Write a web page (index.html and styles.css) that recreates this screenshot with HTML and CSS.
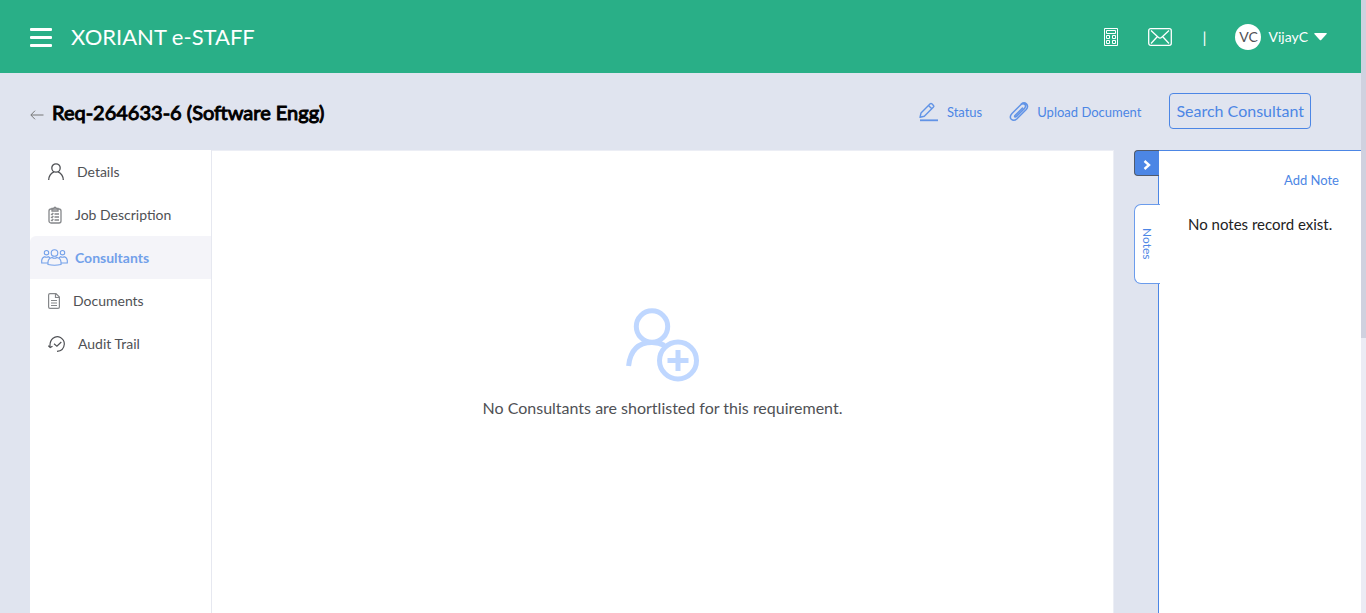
FILE: index.html
```html
<!DOCTYPE html>
<html lang="en">
<head>
<meta charset="utf-8">
<meta name="viewport" content="width=device-width, initial-scale=1">
<title>XORIANT e-STAFF</title>
<link rel="stylesheet" href="styles.css">
</head>
<body>
<div class="page">
  <header class="topbar">
    <button class="menu-button" type="button" aria-label="Menu"><span class="bar"></span><span class="bar"></span><span class="bar"></span></button>
    <a class="brand" href="#">XORIANT e-STAFF</a>
    <div class="tools">
      <a class="tool calc" href="#" aria-label="Calculator">
        <svg width="14" height="18" viewBox="0 0 14 18" fill="none" stroke="currentColor"><path d="M.5 .5h13v17H.5zM2.5 2.500h9v3h-9zM2.500 7.500h3v3h-3zM8.500 7.500h3v3h-3zM2.500 12.500h3v3h-3zM8.500 12.500h3v3h-3z"/></svg>
      </a>
      <a class="tool mail" href="#" aria-label="Mail">
        <svg width="24" height="18" viewBox="0 0 24 18" fill="none" stroke="currentColor" stroke-width="1.3"><rect x=".7" y=".7" width="22.600" height="16.600" rx="2"/><path d="M3 2.500l7.500 7q1.500 1.200 3 0l7.500-7M3 15.500l6-6.500M21 15.500l-6-6.500"/></svg>
      </a>
      <span class="divider">|</span>
      <button class="user" type="button"><span class="avatar">VC</span><span>VijayC</span>
        <svg width="13" height="8" viewBox="0 0 13 8" fill="currentColor"><path d="M.8 0h11.400q1 .3.400 1L7.200 7q-.7.600-1.400 0L.4 1Q0 .2.800 0z"/></svg>
      </button>
    </div>
  </header>

  <div class="titlebar">
    <a class="back" href="#" aria-label="Back"><svg width="14" height="10" viewBox="0 0 14 10" fill="none" stroke="currentColor"><path d="M13.500 5H1M5 .7L.8 5 5 9.300"/></svg></a>
    <h1 class="title">Req-264633-6 (Software Engg)</h1>
    <div class="actions">
      <a class="action" href="#">
        <svg width="20" height="20" viewBox="0 0 20 20" fill="none" stroke="currentColor" stroke-width="1.400" stroke-linejoin="round" opacity=".85"><path d="M2 11L11.200 1.800q.8-.8 1.600 0l1.700 1.700q.8.800 0 1.600L5.300 14.200 1 15.300zM9.500 3.500l3.300 3.300"/><path d="M1 18.300h18" stroke-width="1.800"/></svg>
        <span>Status</span>
      </a>
      <a class="action" href="#">
        <svg width="20" height="20" viewBox="0 0 20 20" fill="none" stroke="currentColor" stroke-width="1.500" stroke-linecap="round" opacity=".85"><path d="M13.500 6L6 13.500q-1 1.500.3 1.500.6 0 1.200-.6l8-8q2-2.300.3-4-1.800-1.700-4 .3L3 11.500q-3 3.300-.7 5.800 2.500 2.300 5.700-.6l9.200-9.200q2.600-3.200.2-5.600-2.400-2.100-5.200.2"/></svg>
        <span>Upload Document</span>
      </a>
      <button class="search" type="button">Search Consultant</button>
    </div>
  </div>

  <div class="content">
    <nav class="sidebar">
      <a class="item" href="#"><svg width="16" height="17" viewBox="0 0 16 17" fill="none" stroke="currentColor" stroke-width="1.300"><circle cx="8" cy="5" r="4.200"/><path d="M.7 17q.2-6 5.200-8.200M15.300 17q-.2-6-5.200-8.200"/></svg><span>Details</span></a>
      <a class="item" href="#"><svg class="soft" width="14" height="18" viewBox="0 0 14 18" fill="none" stroke="currentColor" stroke-width="1.300"><rect x="1" y="3" width="12" height="14" rx="2"/><path d="M4 5V2.500h1.500Q7 0 8.500 2.500H10V5zM6.500 8H11M6.500 11H11M6.500 14H11M3 8l1 .7L5.300 7M3 11l1 .7L5.300 10M3 14l1 .7L5.300 13"/></svg><span>Job Description</span></a>
      <a class="item active" href="#" aria-current="page"><svg width="27" height="17" viewBox="0 0 27 17" fill="none" stroke="currentColor" stroke-width="1.100"><circle cx="13.500" cy="4" r="3.300"/><circle cx="5.500" cy="3.700" r="2.200"/><circle cx="21.500" cy="3.700" r="2.200"/><path d="M7 15.500V13q.2-3.500 4-4.500 2.500 1.500 5 0 3.800 1 4 4.500v2.500q-6.500 1.500-13 0zM7 14H.7v-2.500q.2-3 3-3.800 1.800 1 3.600 0l1.700 1M20 14h6.300v-2.500q-.2-3-3-3.800-1.800 1-3.600 0l-1.700 1"/></svg><span>Consultants</span></a>
      <a class="item" href="#"><svg class="soft" width="12" height="16" viewBox="0 0 12 16" fill="none" stroke="currentColor" stroke-width="1.200"><path d="M2 .6h6l3.400 3.500V14q0 1.400-1.400 1.400H2Q.6 15.400.6 14V2Q.6.600 2 .6zM7.500.8v3.700h3.700M3 7.500h6M3 10h6M3 12.500h6"/></svg><span>Documents</span></a>
      <a class="item" href="#"><svg width="17" height="16" viewBox="0 0 17 16" fill="none" stroke="currentColor" stroke-width="1.200"><path d="M2 11.500Q1.500 5 5 2.300 8.500-.5 12.500 1.500 16.500 4 16.300 8.200 15.800 14.800 9 15.400M.3 9.700L2.200 11.600l2.300-1.400M6 7.800l2.900 2.300L13.300 6"/></svg><span>Audit Trail</span></a>
    </nav>

    <main class="main">
      <svg width="74" height="74" viewBox="0 0 74 74" fill="none" stroke="#bfd7ff" stroke-width="5"><circle cx="26" cy="18.500" r="15.700"/><path d="M2.600 58Q5 34.500 26 34.500q7 0 12.500 3"/><circle cx="52" cy="52.500" r="18.500"/><path d="M52 42v21M41.500 52.500h21"/></svg>
      <p class="empty">No Consultants are shortlisted for this requirement.</p>
    </main>

    <aside class="notes">
      <div class="tabs">
        <button class="collapse" type="button" aria-label="Collapse notes"><svg width="8" height="10" viewBox="0 0 8 10" fill="none" stroke="currentColor" stroke-width="2.400"><path d="M1.500 1L6 5 1.500 9"/></svg></button>
        <button class="tab" type="button">Notes</button>
      </div>
      <div class="notes-panel">
        <a class="add" href="#">Add Note</a>
        <p class="none">No notes record exist.</p>
      </div>
    </aside>
  </div>
</div>
<div class="track"><div class="thumb"></div></div>
</body>
</html>
```
FILE: styles.css
```css
* { box-sizing: border-box; }

body {
  margin: 0;
  min-height: 100vh;
  display: flex;
  background: #e0e4ef;
  color: #4f5155;
  font-family: Lato, "Liberation Sans", sans-serif;
  font-size: 14px;
}

a { color: inherit; text-decoration: none; }
button { font: inherit; color: inherit; background: none; border: 0; padding: 0; cursor: pointer; }
svg { display: block; flex: none; }
h1, p { margin: 0; }

.page { flex: 1; display: flex; flex-direction: column; }

.topbar {
  display: flex;
  align-items: center;
  height: 73px;
  padding: 0 34px 0 30px;
  background: #29af87;
  color: #fff;
}
.menu-button { display: flex; flex-direction: column; gap: 5px; width: 22px; margin-top: 2px; }
.bar { height: 3px; width: 100%; background: #fff; border-radius: 1px; }
.brand { margin-left: 19px; font-size: 22px; }
.tools { display: flex; align-items: center; margin-left: auto; }
.mail { margin-left: 30px; }
.divider { margin: 0 29px 0 30px; font-size: 16px; }
.user { display: flex; align-items: center; gap: 6px; }
.avatar {
  width: 26px;
  height: 26px;
  margin-right: 1px;
  border-radius: 50%;
  background: #fff;
  color: #4f5155;
  line-height: 25px;
}

.titlebar { display: flex; align-items: center; height: 77px; padding: 0 50px 2px 30px; }
.back { padding-top: 8px; color: #777; }
.title { margin: 3px 0 0 8px; font-size: 20px; font-weight: 400; color: #000; -webkit-text-stroke: 1px #000; }
.actions { display: flex; align-items: center; margin-left: auto; color: #4c86e5; }
.action { display: flex; align-items: center; gap: 8px; margin-right: 28px; padding-top: 2px; font-size: 13px; }
.action + .action { margin-right: 28px; margin-left: -1px; }
.search {
  height: 36px;
  padding: 0 6px;
  border: 1px solid #4c86e5;
  border-radius: 4px;
  font-size: 16px;
}

.content { flex: 1; display: flex; }
.sidebar { width: 182px; margin-left: 30px; background: #fff; border-right: 1px solid #e6e8f0; }
.item { display: flex; align-items: center; gap: 13px; height: 43px; padding-left: 18px; }
.soft { color: #85878a; }
.item.active {
  gap: 7px;
  padding-left: 11px;
  border-top-left-radius: 6px;
  background: #f4f4f9;
  color: #72a0ea;
  font-weight: 700;
}

.main {
  flex: 1;
  display: flex;
  flex-direction: column;
  align-items: center;
  padding-top: 157px;
  border-top: 1px solid #eceef5;
  border-right: 1px solid #eceef5;
  background: #fff;
}
.empty { margin-top: 16px; font-size: 16px; }

.notes { display: flex; width: 227px; margin-left: 20px; }
.tabs { display: flex; flex-direction: column; width: 25px; z-index: 1; }
.collapse {
  display: flex;
  align-items: center;
  justify-content: center;
  height: 26px;
  padding-top: 3px;
  border: 1px solid #505a6c;
  border-right: 0;
  border-radius: 4px 0 0 4px;
  background: #4c86e5;
  color: #fff;
}
.tab {
  height: 80px;
  width: 26px;
  margin-top: 28px;
  border: 1px solid #6b9cec;
  border-right: 0;
  border-radius: 7px 0 0 7px;
  background: #fff;
  color: #4c86e5;
  font-size: 12px;
  writing-mode: vertical-rl;
}
.notes-panel {
  flex: 1;
  margin-left: -1px;
  padding: 21px 22px 0 29px;
  border-top: 1px solid #4c86e5;
  border-left: 1px solid #4c86e5;
  background: #fff;
}
.add { display: block; text-align: right; color: #4c86e5; font-size: 13px; }
.none { margin-top: 27px; color: #222; font-size: 15px; white-space: nowrap; }

.track { width: 5px; background: #ebebf4; }
.thumb { height: 338px; background: #cfd1df; }
```
